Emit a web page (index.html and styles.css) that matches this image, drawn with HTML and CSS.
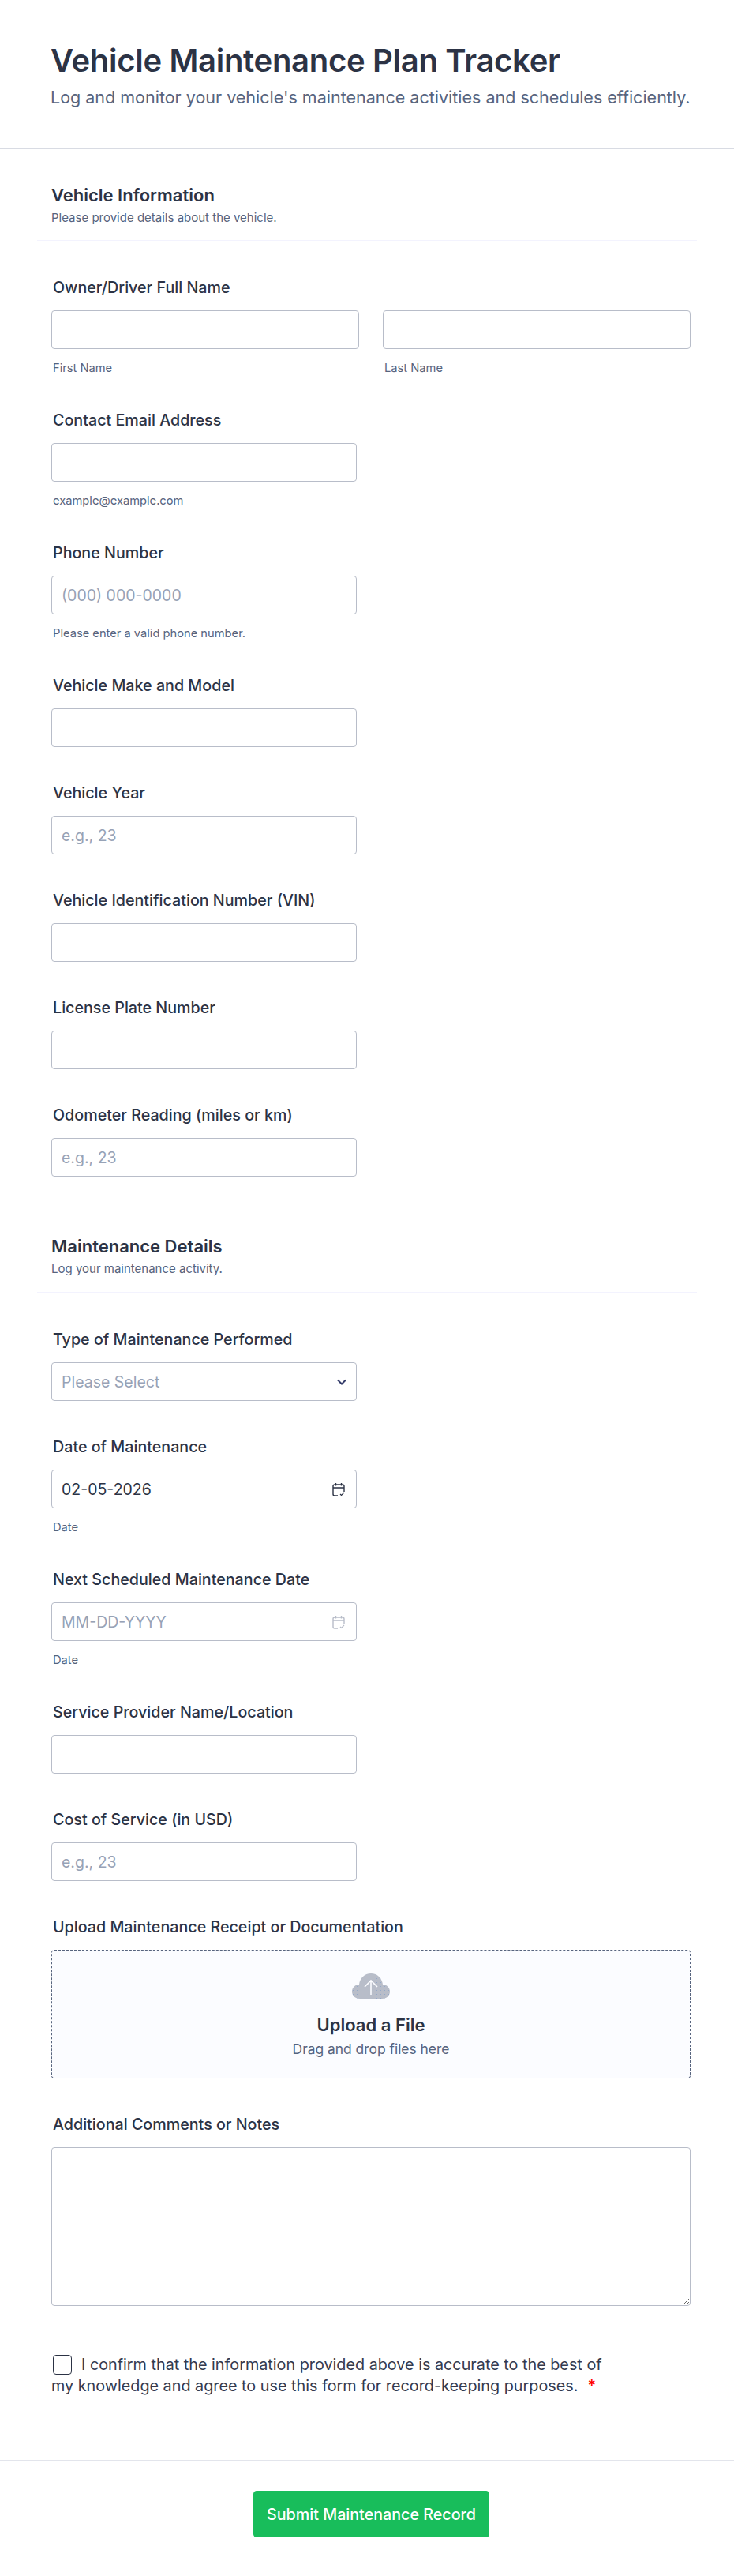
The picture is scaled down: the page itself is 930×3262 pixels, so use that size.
FILE: index.html
```html
<!DOCTYPE html>
<html lang="en">
<head>
<meta charset="utf-8">
<title>Vehicle Maintenance Plan Tracker</title>
<link rel="stylesheet" href="styles.css">
</head>
<body>
<form class="form">
  <header class="page-header">
    <h1 class="page-title">Vehicle Maintenance Plan Tracker</h1>
    <p class="page-subtitle">Log and monitor your vehicle's maintenance activities and schedules efficiently.</p>
  </header>

  <section class="section section-first">
    <div class="section-head">
      <h2 class="section-title">Vehicle Information</h2>
      <p class="section-desc">Please provide details about the vehicle.</p>
    </div>
    <div class="fields">
      <div class="field">
        <label class="label">Owner/Driver Full Name</label>
        <div class="name-row">
          <div class="name-col"><input class="input input-full" type="text"><span class="hint">First Name</span></div>
          <div class="name-col"><input class="input input-full" type="text"><span class="hint">Last Name</span></div>
        </div>
      </div>
      <div class="field">
        <label class="label">Contact Email Address</label>
        <input class="input" type="text">
        <span class="hint">example@example.com</span>
      </div>
      <div class="field">
        <label class="label">Phone Number</label>
        <input class="input" type="text" placeholder="(000) 000-0000">
        <span class="hint">Please enter a valid phone number.</span>
      </div>
      <div class="field">
        <label class="label">Vehicle Make and Model</label>
        <input class="input" type="text">
      </div>
      <div class="field">
        <label class="label">Vehicle Year</label>
        <input class="input" type="text" placeholder="e.g., 23">
      </div>
      <div class="field">
        <label class="label">Vehicle Identification Number (VIN)</label>
        <input class="input" type="text">
      </div>
      <div class="field">
        <label class="label">License Plate Number</label>
        <input class="input" type="text">
      </div>
      <div class="field">
        <label class="label">Odometer Reading (miles or km)</label>
        <input class="input" type="text" placeholder="e.g., 23">
      </div>
    </div>
  </section>

  <section class="section section-second">
    <div class="section-head">
      <h2 class="section-title">Maintenance Details</h2>
      <p class="section-desc">Log your maintenance activity.</p>
    </div>
    <div class="fields">
      <div class="field">
        <label class="label">Type of Maintenance Performed</label>
        <div class="control">
          <select class="input select"><option>Please Select</option></select>
          <svg class="control-icon chevron" width="12" height="8" viewBox="0 0 12 8" fill="none"><path d="M1 1.500 6 6.500l5-5" stroke="#343c6a" stroke-width="2"/></svg>
        </div>
      </div>
      <div class="field">
        <label class="label">Date of Maintenance</label>
        <div class="control">
          <input class="input input-date" type="text" value="02-05-2026">
          <svg class="control-icon calendar" width="18" height="18" viewBox="0 0 18 18" fill="none" stroke="#2c3345" stroke-width="1.400"><path d="M8 17H4a2 2 0 0 1-2-2V5a2 2 0 0 1 2-2h10a2 2 0 0 1 2 2v7M2 7h14M5.500 1v3.500M12.500 1v3.500"/><path d="m11 15 1.500 1.500L16 13" stroke-width="1.200"/></svg>
        </div>
        <span class="hint">Date</span>
      </div>
      <div class="field">
        <label class="label">Next Scheduled Maintenance Date</label>
        <div class="control">
          <input class="input" type="text" placeholder="MM-DD-YYYY">
          <svg class="control-icon calendar" width="18" height="18" viewBox="0 0 18 18" fill="none" stroke="#b8bdc9" stroke-width="1.400"><path d="M8 17H4a2 2 0 0 1-2-2V5a2 2 0 0 1 2-2h10a2 2 0 0 1 2 2v7M2 7h14M5.500 1v3.500M12.500 1v3.500"/><path d="m11 15 1.500 1.500L16 13" stroke-width="1.200"/></svg>
        </div>
        <span class="hint">Date</span>
      </div>
      <div class="field">
        <label class="label">Service Provider Name/Location</label>
        <input class="input" type="text">
      </div>
      <div class="field">
        <label class="label">Cost of Service (in USD)</label>
        <input class="input" type="text" placeholder="e.g., 23">
      </div>
      <div class="field">
        <label class="label">Upload Maintenance Receipt or Documentation</label>
        <div class="dropzone">
          <svg class="cloud" width="48" height="32" viewBox="0 0 48 32">
            <defs><pattern id="dots" width="5" height="5" patternUnits="userSpaceOnUse"><circle cx="1.500" cy="1.500" r="0.600" fill="#8fa6c8"/></pattern></defs>
            <path d="M10 32C4 32 0 28 0 23c0-5 4-9 9-9 1-8 7-14 15-14s14 6 15 14c5 0 9 4 9 9 0 5-4 9-10 9z" fill="#b8bdc9"/>
            <path d="M10 32C4 32 0 28 0 23c0-5 4-9 9-9 1-8 7-14 15-14s14 6 15 14c5 0 9 4 9 9 0 5-4 9-10 9z" fill="url(#dots)"/>
            <path d="M24 27V10M16 17l8-8 8 8" fill="none" stroke="#fbfcff" stroke-width="1.600"/>
          </svg>
          <span class="drop-title">Upload a File</span>
          <span class="drop-sub">Drag and drop files here</span>
        </div>
      </div>
      <div class="field">
        <label class="label">Additional Comments or Notes</label>
        <textarea class="input textarea"></textarea>
      </div>
    </div>
    <div class="consent">
      <div class="consent-line"><span class="checkbox"></span><span>I confirm that the information provided above is accurate to the best of</span></div>
      <div class="consent-line"><span>my knowledge and agree to use this form for record-keeping purposes.</span><b class="required">*</b></div>
    </div>
  </section>

  <footer class="form-footer">
    <button class="submit" type="button">Submit Maintenance Record</button>
  </footer>
</form>
</body>
</html>
```
FILE: styles.css
```css
* { box-sizing: border-box; }
html, body { margin: 0; padding: 0; background: #fff; }
body { font-family: Inter, "Liberation Sans", sans-serif; color: #2c3345; }
.form { width: 930px; }

.page-header { height: 189px; padding: 52px 64px 0; border-bottom: 1px solid #d8dbe3; }
.page-title { margin: 0; font-size: 40px; line-height: 50px; font-weight: 600; letter-spacing: -0.3px; }
.page-subtitle { margin: 8px 0 0; font-size: 21.500px; line-height: 26px; color: #57647e; font-weight: 400; white-space: nowrap; }

.section { padding: 0 47px; }
.section-first { padding-top: 44px; }
.section-second { padding-top: 74px; }
.section-head { padding: 0 18px 19px; border-bottom: 1px solid #f3f3fe; margin-bottom: 47px; }
.section-second .section-head { padding-bottom: 20px; }
.section-title { margin: 0; font-size: 22px; line-height: 28px; font-weight: 600; }
.section-desc { margin: 6px 0 0; font-size: 15px; line-height: 18px; color: #57647e; }

.fields { display: flex; flex-direction: column; gap: 46px; padding: 0 8px 0 18px; }
.field { display: flex; flex-direction: column; align-items: flex-start; }
.label { display: block; font-size: 19.700px; line-height: 24px; font-weight: 500; margin: 0 0 17px 2px; }
.input { display: block; width: 387px; height: 49px; padding: 0 12px; border: 1px solid #b8bdc9; border-radius: 4px; background: #fff; font: 400 19.500px Inter, "Liberation Sans", sans-serif; color: #2c3345; outline: none; }
.input::placeholder { color: #97a2b6; opacity: 1; }
.input-full { width: 100%; }
.hint { display: block; margin: 16px 0 0 2px; font-size: 14.700px; line-height: 16px; color: #57647e; }

.name-row { display: grid; grid-template-columns: 390px 390px; column-gap: 30px; }
.name-col { display: flex; flex-direction: column; }

.control { position: relative; width: 387px; }
.control-icon { position: absolute; top: 50%; transform: translateY(-50%); }
.chevron { right: 13px; }
.calendar { right: 14px; }
.select { appearance: none; -webkit-appearance: none; color: #97a2b6; }

.dropzone { display: flex; flex-direction: column; align-items: center; width: 100%; height: 163px; padding-top: 29px; border: 1px dashed #57647e; border-radius: 4px; background: #fbfcff; }
.cloud { display: block; }
.drop-title { margin-top: 19px; font-size: 22px; line-height: 28px; font-weight: 600; }
.drop-sub { margin-top: 6px; font-size: 17.400px; line-height: 22px; color: #57647e; }

.textarea { width: 100%; height: 201px; padding: 10px 12px; resize: both; }

.consent { margin: 61px 0 0 18px; font-size: 19.800px; line-height: 27px; color: #343a4f; }
.consent-line { display: flex; align-items: center; white-space: nowrap; }
.checkbox { flex: none; width: 24px; height: 25px; margin: 0 12px 0 2px; border: 1.500px solid #2c3345; border-radius: 4px; }
.required { margin-left: 12px; color: #f00; font-weight: 600; }

.form-footer { display: flex; justify-content: center; margin-top: 80px; padding: 38px 0 50px 11px; border-top: 1px solid #e3e5ec; }
.submit { width: 299px; height: 59px; border: 1px solid #18bd5b; border-radius: 4px; background: #18bd5b; color: #fff; font: 500 19.700px Inter, "Liberation Sans", sans-serif; }
```
